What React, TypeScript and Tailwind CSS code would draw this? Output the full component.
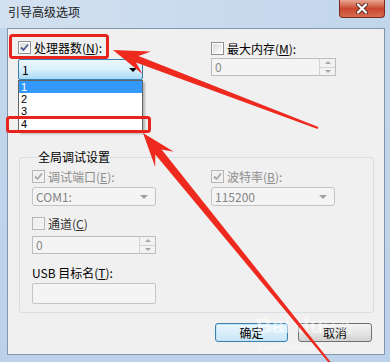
import React from "react";

type Pt = [number, number];

// tapered arrow polygon from tip to tail
function arrowPoints(tip: Pt, tail: Pt, head: number, hw: number, w1: number, w2: number) {
  const [tx, ty] = tip;
  const dx = tail[0] - tx;
  const dy = tail[1] - ty;
  const L = Math.hypot(dx, dy);
  const ux = dx / L;
  const uy = dy / L;
  const nx = -uy;
  const ny = ux;
  const at = (d: number, s: number): Pt => [tx + ux * d + nx * s, ty + uy * d + ny * s];
  const pts: Pt[] = [
    [tx, ty],
    at(head, hw),
    at(head * 0.72, w1 / 2),
    at(L, w2 / 2),
    at(L, -w2 / 2),
    at(head * 0.72, -w1 / 2),
    at(head, -hw),
  ];
  return pts.map((p) => `${p[0].toFixed(1)},${p[1].toFixed(1)}`).join(" ");
}

function Check({ checked, disabled }: { checked?: boolean; disabled?: boolean }) {
  return (
    <span
      className={`relative flex h-[13px] w-[13px] shrink-0 items-center justify-center border ${
        disabled ? "border-[#b5b5b5] bg-[#f4f4f4]" : "border-[#8e8f8f] bg-white"
      }`}
    >
      <span
        className={`h-[9px] w-[9px] ${
          disabled ? "bg-[#f0f0f0]" : "bg-gradient-to-br from-[#dcdcdc] to-[#fbfbfb]"
        }`}
      />
      {checked && (
        <svg viewBox="0 0 11 11" className="absolute left-0 top-0 h-[11px] w-[11px]">
          <path
            d="M2 5.5 L4.5 8 L9 2.5"
            fill="none"
            stroke={disabled ? "#a9a9a9" : "#4c5f8c"}
            strokeWidth="1.8"
          />
        </svg>
      )}
    </span>
  );
}

function Spin({ w }: { w: string }) {
  return (
    <div className={`flex h-[18px] ${w} border border-[#b9bec3] bg-[#f4f4f4]`}>
      <span className="flex-1 pl-[3px] leading-[16px] text-[#8a8a8a]">0</span>
      <div className="flex w-[16px] flex-col border-l border-[#d0d4d8]">
        <span className="flex flex-1 items-center justify-center border-b border-[#d0d4d8] bg-[#f2f2f2]">
          <span className="h-0 w-0 border-x-[3px] border-b-[3px] border-x-transparent border-b-[#a8a8a8]" />
        </span>
        <span className="flex flex-1 items-center justify-center bg-[#f2f2f2]">
          <span className="h-0 w-0 border-x-[3px] border-t-[3px] border-x-transparent border-t-[#a8a8a8]" />
        </span>
      </div>
    </div>
  );
}

function DisabledCombo({ value }: { value: string }) {
  return (
    <div className="flex h-[19px] w-[124px] items-center justify-between rounded-[3px] border border-[#c4c4c4] bg-[#f4f4f4] pl-[3px] pr-[7px] text-[#858585]">
      <span className="leading-[17px]">{value}</span>
      <span className="h-0 w-0 border-x-[4px] border-t-[4px] border-x-transparent border-t-[#a0a0a0]" />
    </div>
  );
}

const opcoes = ["1", "2", "3", "4"];

export default function App() {
  return (
    <div className="relative h-[362px] w-[390px] overflow-hidden bg-gradient-to-b from-[#c4d7ec] to-[#bcd2ea] font-['Noto_Sans_CJK_SC','Noto_Sans',sans-serif] text-[12px] text-black">
      {/* title bar */}
      <div className="flex h-[28px] justify-between bg-gradient-to-r from-[#d3e1f0] via-[#c9dbee] to-[#c1d5eb]">
        <span className="pl-[8px] pt-[4px] leading-[16px] text-[#1a1a1a]">引导高级选项</span>
        <button
          type="button"
          className="mr-[5px] flex h-[18px] w-[46px] items-center justify-center rounded-b-[4px] border border-t-0 border-[#7b2a1c] bg-gradient-to-b from-[#e8a693] via-[#c9472f] to-[#d56a4f]"
        >
          <svg viewBox="0 0 14 11" className="h-[11px] w-[14px]">
            <path d="M3 1.5 L11 9.5 M11 1.5 L3 9.5" stroke="#5a2a22" strokeWidth="4" strokeLinecap="round" />
            <path d="M3 1.5 L11 9.5 M11 1.5 L3 9.5" stroke="#ffffff" strokeWidth="2.3" strokeLinecap="round" />
          </svg>
        </button>
      </div>

      {/* client area */}
      <div className="ml-[7px] h-[327px] w-[378px] border border-[#8196ad] bg-[#f0f0f0]">
        <div className="flex h-[120px] pl-[10px] pt-[12px]">
          <div className="w-[193px]">
            <label className="flex h-[13px] items-center gap-[3px]">
              <Check checked />
              <span className="leading-[13px]">
                处理器数(<u>N</u>):
              </span>
            </label>
            <div className="relative mt-[5px] h-[21px] w-[125px]">
              <div className="flex h-full items-center justify-between rounded-[2px] border border-[#3c7fb1] bg-gradient-to-b from-[#eaf6fd] via-[#d9f0fc] to-[#a7d9f5] pl-[3px] pr-[5px]">
                <span className="leading-[19px]">1</span>
                <span className="h-0 w-0 border-x-[4px] border-t-[4px] border-x-transparent border-t-black" />
              </div>
              <div className="absolute left-0 top-[21px] w-[125px] border border-[#646464] bg-white font-['Liberation_Sans',sans-serif] text-[11px] shadow-[2px_2px_2px_rgba(0,0,0,0.25)]">
                {opcoes.map((o, i) => (
                  <div
                    key={o}
                    className={`flex items-center overflow-hidden pl-[2px] leading-[11px] ${
                      i === 0 ? "h-[12px] bg-[#3399ff] text-white" : i === 1 ? "h-[12px]" : "h-[13px]"
                    }`}
                  >
                    {o}
                  </div>
                ))}
              </div>
            </div>
          </div>
          <div>
            <label className="flex h-[13px] items-center gap-[3px] pt-px">
              <Check />
              <span className="leading-[13px]">
                最大内存(<u>M</u>):
              </span>
            </label>
            <div className="mt-[4px]">
              <Spin w="w-[125px]" />
            </div>
          </div>
        </div>

        <fieldset className="ml-[11px] w-[355px] rounded-[3px] border border-[#d5dfe5] pb-[8px] pl-[12px]">
          <legend className="ml-[6px] px-0 leading-[16px]">全局调试设置</legend>
          <div className="mt-[5px] flex">
            <div className="w-[179px]">
              <label className="flex h-[13px] items-center gap-[3px] text-[#8d8d8d]">
                <Check checked disabled />
                <span className="leading-[13px]">
                  调试端口(<u>E</u>):
                </span>
              </label>
              <div className="mt-[4px]">
                <DisabledCombo value="COM1:" />
              </div>
            </div>
            <div>
              <label className="flex h-[13px] items-center gap-[3px] text-[#8d8d8d]">
                <Check checked disabled />
                <span className="leading-[13px]">
                  波特率(<u>B</u>):
                </span>
              </label>
              <div className="mt-[4px]">
                <DisabledCombo value="115200" />
              </div>
            </div>
          </div>
          <label className="mt-[11px] flex h-[13px] items-center gap-[3px] text-[#333333]">
            <Check disabled />
            <span className="leading-[13px]">
              通道(<u>C</u>)
            </span>
          </label>
          <div className="mt-[6px]">
            <Spin w="w-[124px]" />
          </div>
          <div className="mt-[12px] leading-[14px]">
            USB 目标名(<u>T</u>):
          </div>
          <div className="mt-[3px] h-[21px] w-[124px] rounded-[2px] border border-[#c3c6c9] bg-[#f4f4f4]" />
        </fieldset>

        <div className="mt-[10px] flex justify-end gap-[10px] pr-[12px]">
          <button
            type="button"
            className="h-[19px] w-[73px] rounded-[3px] border border-[#3c7fb1] bg-gradient-to-b from-[#eaf6fd] to-[#c9e6f6] leading-[17px] shadow-[inset_0_0_0_1px_#bfe4f7]"
          >
            确定
          </button>
          <button
            type="button"
            className="h-[19px] w-[74px] rounded-[3px] border border-[#707070] bg-gradient-to-b from-[#f2f2f2] via-[#e6e6e6] to-[#d2d2d2] leading-[17px]"
          >
            取消
          </button>
        </div>
      </div>

      {/* watermark */}
      <div className="pointer-events-none absolute left-[256px] top-[315px] font-['Liberation_Sans',sans-serif] text-[22px] font-bold leading-[22px] text-white/50">
        Bai du<span className="text-[15px] font-normal">经验</span>
      </div>
      <div className="pointer-events-none absolute left-[258px] top-[342px] font-['Liberation_Sans',sans-serif] text-[8px] leading-[9px] text-white/60">
        jingyan.baidu.com
      </div>

      {/* annotations */}
      <svg className="pointer-events-none absolute inset-0" width="390" height="362" viewBox="0 0 390 362">
        <rect x="10.5" y="35.5" width="97" height="22" rx="2" fill="none" stroke="#e8231d" strokeWidth="3" />
        <rect x="7.5" y="117.5" width="142" height="14" rx="2" fill="none" stroke="#e8231d" strokeWidth="3" />
        <polygon points={arrowPoints([113, 50], [318, 128], 36, 12, 7, 2)} fill="#ee2a1f" />
        <polygon points={arrowPoints([143, 133], [331, 364], 34, 12, 8, 2)} fill="#ee2a1f" />
      </svg>
    </div>
  );
}
